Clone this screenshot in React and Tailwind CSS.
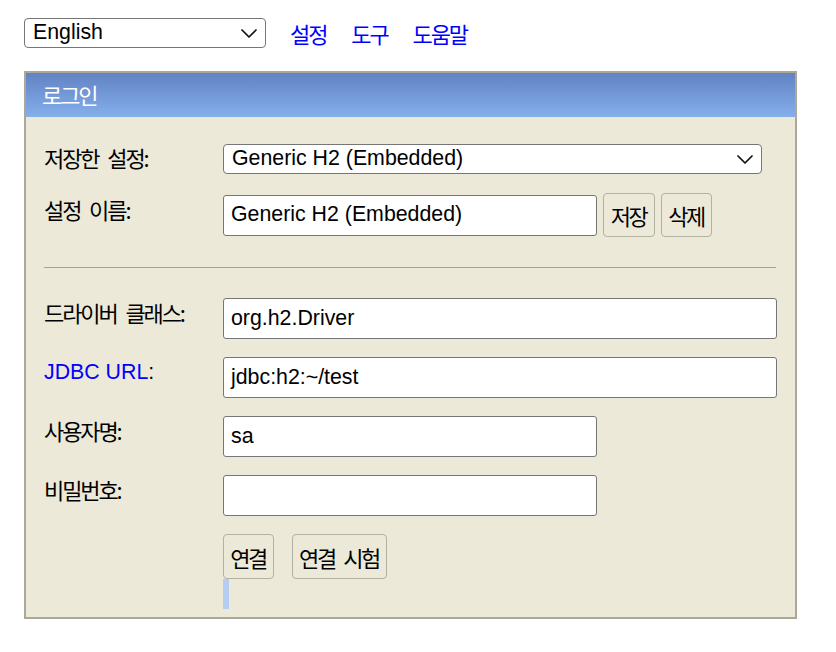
import React from "react";

function Chevron() {
  return (
    <svg width="16" height="9" viewBox="0 0 16 9" fill="none">
      <path d="M1 1 L8 8 L15 1" stroke="#111" strokeWidth="1.7" strokeLinecap="round" strokeLinejoin="round" />
    </svg>
  );
}

const kr = "font-['Noto_Sans_CJK_KR',sans-serif] text-[22px] tracking-[-2.1px] [word-spacing:6px]";

function Label({ children, pt }) {
  return (
    <div className={"w-[179px] shrink-0 leading-[24px] " + pt}>
      <span className="font-['Noto_Sans_CJK_KR',sans-serif] text-[22px] tracking-[-2.1px] [word-spacing:6px]">{children}</span>
    </div>
  );
}

function Field({ w, children }) {
  return (
    <div className={"h-[41px] bg-white border border-[#767676] rounded-[3px] flex items-center pl-[7px] " + w}>
      {children}
    </div>
  );
}

function Btn({ children, w, h }) {
  return (
    <div className={"flex items-center justify-center border border-[#b3b0a4] rounded-[4px] bg-[#ece9d8] " + w + " " + h}>
      <span className="font-['Noto_Sans_CJK_KR',sans-serif] text-[22px] leading-[24px] tracking-[-2.4px] [word-spacing:6px] pr-[1px]">{children}</span>
    </div>
  );
}

export default function App() {
  return (
    <div className="w-[836px] h-[652px] bg-white text-black font-['Liberation_Sans','Noto_Sans_CJK_KR',sans-serif] text-[21.33px] overflow-hidden">
      <div className="flex items-center h-[30px] mt-[18px] ml-[24px]">
        <div className="w-[242px] h-[30px] border border-[#767676] rounded-[4px] bg-white flex items-center justify-between pl-[8px] pr-[8px]">
          <span>English</span>
          <Chevron />
        </div>
        <div className="flex items-center ml-[24px] gap-[25px] text-[#0000ff] leading-[24px]">
          <span className={kr}>설정</span>
          <span className={kr}>도구</span>
          <span className={kr}>도움말</span>
        </div>
      </div>

      <div className="mt-[23px] ml-[24px] w-[773px] h-[548px] border-2 border-[#aca899] bg-[#ece9d8] flex flex-col">
        <div className="h-[44px] shrink-0 bg-linear-to-b from-[#6283c3] to-[#85afec] text-white flex items-center pl-[16px] pb-[3px] leading-[24px]">
          <span className={kr}>로그인</span>
        </div>

        <div className="flex flex-col pl-[18px] pt-[27px]">
          <div className="flex items-start">
            <Label pt="pt-[1px]">저장한 설정:</Label>
            <div className="w-[539px] h-[30px] border border-[#767676] rounded-[4px] bg-white flex items-center justify-between pl-[8px] pr-[8px]">
              <span>Generic H2 (Embedded)</span>
              <Chevron />
            </div>
          </div>

          <div className="flex items-start mt-[19px]">
            <Label pt="pt-[4px]">설정 이름:</Label>
            <div className="flex items-center gap-[6px] h-[44px]">
              <Field w="w-[374px]">Generic H2 (Embedded)</Field>
              <Btn w="w-[52px]" h="h-[44px]">저장</Btn>
              <Btn w="w-[51px]" h="h-[44px]">삭제</Btn>
            </div>
          </div>

          <div className="mt-[30px] w-[732px] h-px bg-[#a3a19a]" />

          <div className="flex items-start mt-[30px]">
            <Label pt="pt-[2px]">드라이버 클래스:</Label>
            <Field w="w-[554px]">org.h2.Driver</Field>
          </div>

          <div className="flex items-start mt-[18px]">
            <div className="w-[179px] shrink-0 leading-[24px] pt-[3px]">
              <span className="text-[#0000ff]">JDBC URL</span>:
            </div>
            <Field w="w-[554px]">jdbc:h2:~/test</Field>
          </div>

          <div className="flex items-start mt-[18px]">
            <Label pt="pt-[2px]">사용자명:</Label>
            <Field w="w-[374px]">sa</Field>
          </div>

          <div className="flex items-start mt-[18px]">
            <Label pt="pt-[2px]">비밀번호:</Label>
            <Field w="w-[374px]"></Field>
          </div>

          <div className="flex items-center gap-[18px] mt-[18px] ml-[179px]">
            <Btn w="w-[51px]" h="h-[45px]">연결</Btn>
            <Btn w="w-[95px]" h="h-[45px]">연결 시험</Btn>
          </div>
          <div className="ml-[179px] w-[6px] h-[30px] bg-[#b5cdf0]" />
        </div>
      </div>
    </div>
  );
}
